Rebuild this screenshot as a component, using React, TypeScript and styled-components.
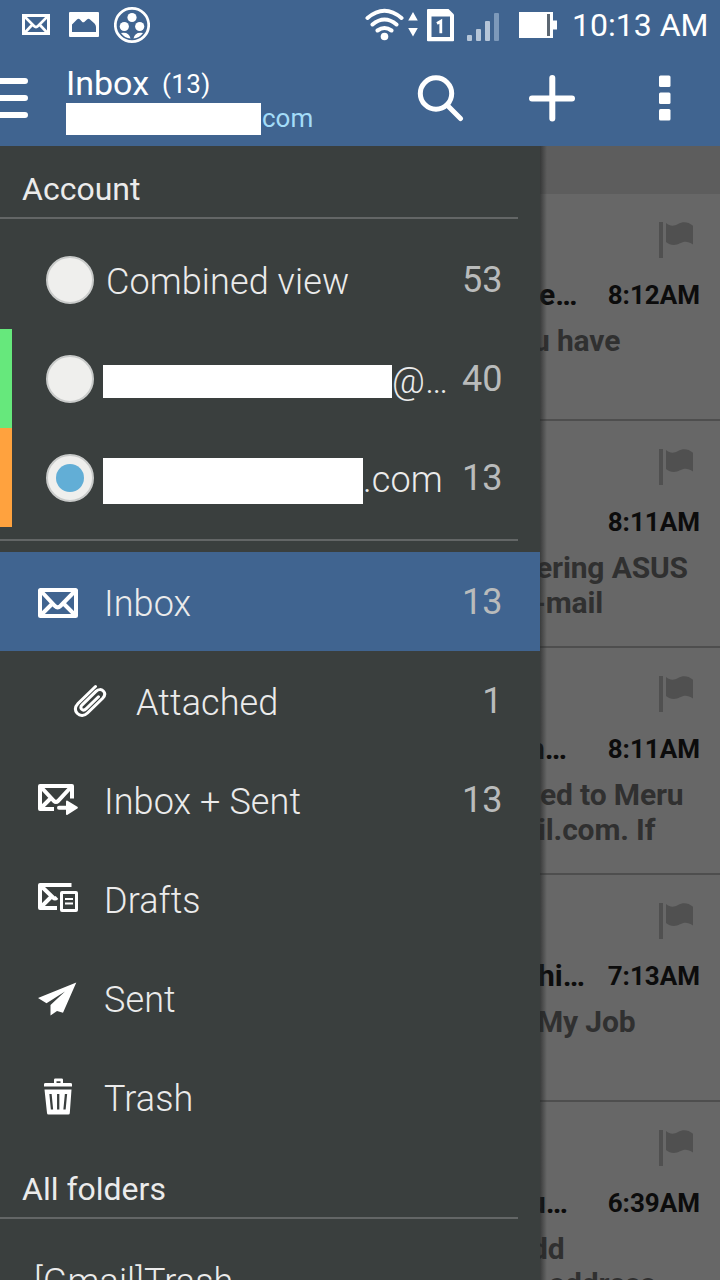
import React from 'react';
import styled, { createGlobalStyle } from 'styled-components';

const GlobalStyle = createGlobalStyle`
  * { box-sizing: border-box; }
  body { margin: 0; background: #676767; font-family: Roboto, "Liberation Sans", sans-serif; }
`;

const Screen = styled.div`
  width: 720px;
  height: 1280px;
  overflow: hidden;
  display: flex;
  flex-direction: column;
`;

const Header = styled.header`
  height: 146px;
  background: #406490;
  color: #fff;
  flex: none;
`;

const StatusBar = styled.div`
  height: 50px;
  display: flex;
  justify-content: space-between;
  padding: 0 12px 0 22px;
`;

const IconGroup = styled.div<{ $gap: number; $after?: number }>`
  display: flex;
  gap: ${p => p.$gap}px;
  margin-right: ${p => p.$after ?? 0}px;
  svg { display: block; flex: none; }
`;

const StatusSide = styled.div`
  display: flex;
`;

const Clock = styled.div`
  width: 136px;
  font-size: 32px;
  line-height: 50px;
  white-space: nowrap;
`;

const Toolbar = styled.div`
  height: 96px;
  display: flex;
  padding-right: 49px;
  svg { display: block; flex: none; }
`;

const TitleBlock = styled.div`
  flex: 1;
  padding: 13px 0 0 38px;
`;

const TitleLine = styled.div`
  display: flex;
  align-items: baseline;
  height: 40px;
  line-height: 40px;
  font-size: 34px;
  white-space: nowrap;
`;

const TitleCount = styled.span`
  margin-left: 13px;
  font-size: 26px;
  letter-spacing: 0.4px;
  position: relative;
  top: -2px;
`;

const AddressLine = styled.div`
  display: flex;
  gap: 1px;
  height: 32px;
  line-height: 30px;
  font-size: 26px;
  color: #a4dcf8;
`;

const Redacted = styled.span<{ $w: number; $h: number }>`
  width: ${p => p.$w}px;
  height: ${p => p.$h}px;
  background: #fff;
  flex: none;
`;

const Body = styled.div`
  flex: 1;
  min-height: 0;
  display: flex;
`;

const Drawer = styled.nav`
  width: 540px;
  flex: none;
  background: #3a3f3e;
  color: #ebebeb;
  overflow: hidden;
`;

const SectionTitle = styled.h2`
  margin: 0;
  width: 518px;
  height: 73px;
  padding: 15px 0 0 22px;
  border-bottom: 2px solid #636666;
  font-size: 32px;
  line-height: 56px;
  font-weight: 400;
`;

const Group = styled.div<{ $ruled?: boolean }>`
  width: 540px;
  padding-top: 11px;
  ${p => p.$ruled && 'padding-bottom: 12px;'}
`;

const Rule = styled.div`
  width: 518px;
  height: 2px;
  background: #636666;
`;

const Row = styled.div<{ $active?: boolean; $stripe?: string; $left: number }>`
  height: 99px;
  display: flex;
  align-items: center;
  border-left: ${p => (p.$stripe ? `12px solid ${p.$stripe}` : 'none')};
  padding-left: ${p => p.$left - (p.$stripe ? 12 : 0)}px;
  padding-right: 37.5px;
  background: ${p => (p.$active ? '#406490' : 'transparent')};
  svg { display: block; flex: none; }
`;

const Radio = styled.span`
  width: 48px;
  height: 48px;
  flex: none;
  display: flex;
  align-items: center;
  justify-content: center;
  border-radius: 50%;
  border: 2px solid #c9cbca;
  background: #efefed;
  margin-top: 1px;
`;

const RadioDot = styled.span`
  width: 28px;
  height: 28px;
  border-radius: 50%;
  background: #62aed6;
`;

const Label = styled.span<{ $gap: number }>`
  flex: 1;
  display: flex;
  align-items: center;
  margin-left: ${p => p.$gap}px;
  padding-top: 4px;
  font-size: 36px;
  line-height: 44px;
  font-weight: 300;
  white-space: nowrap;
  letter-spacing: 0.1px;
`;

const Masked = styled(Label)`
  ${Redacted} { margin-top: 2px; }
`;

const Count = styled.span`
  font-size: 36px;
  line-height: 44px;
  color: #b9bbbb;
`;

const MessageList = styled.main`
  flex: 1;
  min-width: 0;
  position: relative;
  overflow: hidden;
  background: #676767;
`;

const DrawerShadow = styled.div`
  position: absolute;
  inset: 0 auto 0 0;
  width: 7px;
  background: linear-gradient(90deg, rgba(35, 37, 37, 0.65), rgba(60, 60, 60, 0));
`;

const ListHeader = styled.div`
  height: 48px;
  background: #5d5d5d;
`;

const Message = styled.article`
  height: 227px;
  border-bottom: 2px solid #4e4e4e;
  padding: 28px 20px 0 0;
  white-space: nowrap;
  font-weight: 700;
  svg { display: block; margin: 0 7px 0 auto; }
`;

const MessageHead = styled.div`
  display: flex;
  justify-content: space-between;
  align-items: flex-start;
  height: 46px;
  margin-top: 19px;
  color: #0c0c0c;
  font-size: 26px;
  line-height: 36px;
`;

const Sender = styled.span<{ $shift: number }>`
  margin-left: ${p => p.$shift}px;
  font-size: 30px;
`;

const Preview = styled.div<{ $shift: number }>`
  margin-left: ${p => p.$shift}px;
  font-size: 30px;
  line-height: 35px;
  height: 35px;
  letter-spacing: -0.15px;
  color: #303030;
`;

const FlagIcon = () => (
  <svg width="34" height="36" viewBox="0 0 34 36" fill="#505050">
    <rect x="0" y="0" width="4" height="36" />
    <path d="M7 1c4 3.500 8 3.300 12 1c5-2.800 10-2.200 15 1.700v18.800c-5-3.500-9-3.500-13-1.200c-5 2.600-10 2-14-1.300z" />
  </svg>
);

const MailStatusIcon = () => (
  <svg width="28" height="50" viewBox="22 0 28 50" fill="none" stroke="#fff">
    <rect x="23.500" y="15.500" width="25" height="18" strokeWidth="3" />
    <path d="M24.500 16.500l9.500 9.500q2 2 4 0L47.500 16.500M24.500 33l8-8.500M47.500 33l-8-8.500" strokeWidth="2.600" />
  </svg>
);

const PictureIcon = () => (
  <svg width="30" height="50" viewBox="69 0 30 50">
    <rect x="69" y="12" width="30" height="25" rx="1" fill="#fff" />
    <path d="M72 32V24.500L77 19.500q1.500-1.500 3 0L82.500 22.200h1.500L87 19.500q1.500-1.500 3 0L94.500 23.500q1.500 1.500 1.500 3.500V32z" fill="#406490" />
  </svg>
);

const ReelIcon = () => (
  <svg width="36" height="50" viewBox="114 0 36 50" fill="#fff">
    <circle cx="132" cy="25" r="16.700" fill="none" stroke="#fff" strokeWidth="2.700" />
    <circle cx="132" cy="17.500" r="4.600" />
    <circle cx="124.300" cy="26.500" r="4.600" />
    <circle cx="139.700" cy="26.500" r="4.600" />
    <path d="M121 33q8-1.500 9.500 5.500q-6-.5-9.500-5.500zM143 33q-8-1.500-9.500 5.500q6-.5 9.500-5.500z" />
  </svg>
);

const WifiIcon = () => (
  <svg width="40" height="50" viewBox="365 0 40 50" fill="none" stroke="#fff" strokeWidth="4" strokeLinecap="round">
    <path d="M367.500 18q17-14.500 34 0M372.500 24.500q12-10 24 0M377.500 30.500q7-5 14 0" />
    <circle cx="384.500" cy="36.500" r="3.800" fill="#fff" stroke="none" />
  </svg>
);

const TransferIcon = () => (
  <svg width="12" height="50" viewBox="407 0 12 50" fill="#fff">
    <path d="M413 12l4.800 8.500h-9.600zM413 36.500l4.800-8.500h-9.600z" />
  </svg>
);

const SimIcon = () => (
  <svg width="28" height="50" viewBox="427 0 28 50">
    <path d="M428 9h20.500l5.500 5.500V40.500q0 .8-1 .8H428q-1 0-1-.8V10q0-1 1-1z" fill="#fff" />
    <path d="M431.500 16.500h18.500V37h-18.500z" fill="#406490" />
    <path d="M437 23.500l3.800-2.200v12" fill="none" stroke="#fff" strokeWidth="2.800" />
  </svg>
);

const SignalIcon = () => (
  <svg width="32" height="50" viewBox="467 0 32 50" fill="#b5c5d8">
    <rect x="467" y="35" width="5" height="6" rx="1" />
    <rect x="476" y="29" width="5" height="12" rx="1" />
    <rect x="485" y="21" width="5" height="20" rx="1" />
    <rect x="494" y="13" width="5" height="28" rx="1" fill="#7d99ba" />
  </svg>
);

const BatteryIcon = () => (
  <svg width="38" height="50" viewBox="519 0 38 50" fill="#fff">
    <path d="M519 12h34v8.500h4v9h-4V38h-34z" />
    <rect x="547" y="14" width="3" height="22" fill="#5c6772" />
  </svg>
);

const MenuIcon = () => (
  <svg width="28" height="96" viewBox="0 50 28 96" stroke="#fff" strokeWidth="6" strokeLinecap="round">
    <path d="M-6 81h31M-6 98h31M-6 115h31" />
  </svg>
);

const SearchIcon = () => (
  <svg width="48" height="96" viewBox="416 50 48 96" fill="none" stroke="#fff" strokeWidth="5">
    <circle cx="436" cy="93.500" r="15.700" />
    <path d="M447.500 105.500L460.500 118.500" strokeLinecap="round" />
  </svg>
);

const PlusIcon = () => (
  <svg width="48" height="96" viewBox="528 50 48 96" fill="none" stroke="#fff" strokeWidth="6" strokeLinecap="round">
    <path d="M552.300 78v40.500M532 98.500h40" />
  </svg>
);

const MoreIcon = () => (
  <svg width="12" height="96" viewBox="659 50 12 96" fill="#fff">
    <rect x="659" y="75.500" width="11.500" height="11.500" rx="1.500" />
    <rect x="659" y="92.500" width="11.500" height="11.500" rx="1.500" />
    <rect x="659" y="109" width="11.500" height="11.500" rx="1.500" />
  </svg>
);

const InboxIcon = () => (
  <svg width="40" height="99" viewBox="38 552 40 99" fill="none" stroke="#fff">
    <rect x="40" y="590" width="36" height="26" rx=".5" strokeWidth="4" />
    <path d="M40.500 590.500L55 606q2.700 2.600 5.400 0L75.500 590.500M40.500 615.500l12.500-12.500M75.500 615.500l-12.500-12.500" strokeWidth="4" />
  </svg>
);

const ClipIcon = () => (
  <svg width="34" height="99" viewBox="73 651 34 99" fill="none" stroke="#fff" strokeWidth="3" strokeLinecap="round">
    <path d="M95.500 686.500L78 703.500c-3 3.200-3.200 7-.8 9.800c2.800 3 7.200 2.800 10.300-.3L102.700 698.200c2.400-2.500 2.600-5.200.6-7.200c-2-2-5-1.800-7.300.4L82.200 704.800c-1.600 1.700-1.600 3.300-.5 4.500c1.200 1.200 3 .9 4.600-.6L98.500 696.800" />
  </svg>
);

const InboxSentIcon = () => (
  <svg width="40" height="99" viewBox="38 750 40 99" fill="none" stroke="#fff" strokeWidth="4">
    <path d="M54 809H40V786h32v12.500" strokeLinejoin="round" />
    <path d="M40.500 786.500L54 801q2 2 4 0L71.500 786.500M40.500 808.500l11.500-11.500" />
    <path d="M59 807.700h8" strokeLinecap="round" />
    <path d="M67 801.500l9.800 6.200-9.800 6.300z" fill="#fff" strokeWidth="2" strokeLinejoin="round" />
  </svg>
);

const DraftsIcon = () => (
  <svg width="40" height="99" viewBox="38 849 40 99" fill="none" stroke="#fff" strokeWidth="4">
    <path d="M71.500 885H40v23h17" strokeLinejoin="round" />
    <path d="M40.500 885.500L53 897.500q2 1.800 4 0M40.500 907.500l11.500-11.500" />
    <rect x="61.500" y="892.500" width="15" height="18" rx=".5" strokeWidth="3" />
    <path d="M65 899h8M65 903.500h8" strokeWidth="2" />
  </svg>
);

const SentIcon = () => (
  <svg width="40" height="99" viewBox="38 948 40 99" fill="#fff">
    <path d="M76.300 982.500L38 998l8.500 5.200L65 991.500 50.500 1005v10.500l6.500-4.500 6 1.800z" />
  </svg>
);

const TrashIcon = () => (
  <svg width="40" height="99" viewBox="38 1047 40 99" fill="#fff">
    <path d="M54 1083v-3.200q0-1.300 1.300-1.300h6.400q1.300 0 1.300 1.300V1083h7.500q1.500 0 1.500 1.200v2.300H44v-2.300q0-1.200 1.500-1.200zM56.500 1083h4v-1.800h-4z" fillRule="evenodd" />
    <path d="M44.500 1089.500h27L69.800 1113q0 1.500-1.500 1.500H48.500q-1.500 0-1.500-1.500z" />
    <path d="M50.500 1094l1.500 15.500M58.200 1094v15.500M66 1094l-1.500 15.500" stroke="#3a3f3e" strokeWidth="2.300" fill="none" />
  </svg>
);

const folders = [
  { name: 'Inbox', icon: <InboxIcon />, count: 13, active: true },
  { name: 'Attached', icon: <ClipIcon />, count: 1, nested: true },
  { name: 'Inbox + Sent', icon: <InboxSentIcon />, count: 13 },
  { name: 'Drafts', icon: <DraftsIcon /> },
  { name: 'Sent', icon: <SentIcon /> },
  { name: 'Trash', icon: <TrashIcon /> },
];

type Line = { text: string; shift: number };
type Mail = { sender: string; senderShift: number; time: string; lines: Line[] };

const messages: Mail[] = [
  { sender: 'e…', senderShift: -1, time: '8:12AM', lines: [{ text: 'u have', shift: -7 }] },
  {
    sender: '',
    senderShift: 0,
    time: '8:11AM',
    lines: [{ text: 'ering ASUS', shift: -4 }, { text: '-mail', shift: -6 }],
  },
  {
    sender: 'n…',
    senderShift: -12,
    time: '8:11AM',
    lines: [{ text: 'ed to Meru', shift: 0 }, { text: 'il.com. If', shift: -2 }],
  },
  { sender: 'hi…', senderShift: -2, time: '7:13AM', lines: [{ text: 'My Job', shift: -3 }] },
  {
    sender: 'u…',
    senderShift: -11,
    time: '6:39AM',
    lines: [{ text: 'dd', shift: -9 }, { text: 'address', shift: 9 }],
  },
];

export default function App() {
  return (
    <>
      <GlobalStyle />
      <Screen>
        <Header>
          <StatusBar>
            <StatusSide>
              <IconGroup $gap={19} $after={15}>
                <MailStatusIcon />
                <PictureIcon />
              </IconGroup>
              <IconGroup $gap={0}>
                <ReelIcon />
              </IconGroup>
            </StatusSide>
            <StatusSide>
              <IconGroup $gap={2} $after={8}>
                <WifiIcon />
                <TransferIcon />
              </IconGroup>
              <IconGroup $gap={12} $after={20}>
                <SimIcon />
                <SignalIcon />
              </IconGroup>
              <IconGroup $gap={0} $after={15}>
                <BatteryIcon />
              </IconGroup>
              <Clock>10:13 AM</Clock>
            </StatusSide>
          </StatusBar>
          <Toolbar>
            <MenuIcon />
            <TitleBlock>
              <TitleLine>
                Inbox <TitleCount>(13)</TitleCount>
              </TitleLine>
              <AddressLine>
                <Redacted $w={195} $h={32} />
                com
              </AddressLine>
            </TitleBlock>
            <IconGroup $gap={64} $after={83}>
              <SearchIcon />
              <PlusIcon />
            </IconGroup>
            <MoreIcon />
          </Toolbar>
        </Header>
        <Body>
          <Drawer>
            <SectionTitle>Account</SectionTitle>
            <Group $ruled>
              <Row $left={46}>
                <Radio />
                <Label $gap={12}>Combined view</Label>
                <Count>53</Count>
              </Row>
              <Row $left={46} $stripe="#66e87c">
                <Radio />
                <Masked $gap={9}>
                  <Redacted $w={289} $h={33} />
                  @…
                </Masked>
                <Count>40</Count>
              </Row>
              <Row $left={46} $stripe="#ffa23e">
                <Radio>
                  <RadioDot />
                </Radio>
                <Masked $gap={9}>
                  <Redacted $w={260} $h={46} />
                  .com
                </Masked>
                <Count>13</Count>
              </Row>
            </Group>
            <Rule />
            <Group>
              {folders.map(f => (
                <Row key={f.name} $active={f.active} $left={f.nested ? 73 : 38}>
                  {f.icon}
                  <Label $gap={f.nested ? 29 : 26}>{f.name}</Label>
                  {f.count && <Count>{f.count}</Count>}
                </Row>
              ))}
            </Group>
            <SectionTitle>All folders</SectionTitle>
            <Group>
              <Row $left={34}>
                <Label $gap={0}>[Gmail]Trash</Label>
              </Row>
            </Group>
          </Drawer>
          <MessageList>
            <ListHeader />
            {messages.map((m, i) => (
              <Message key={i}>
                <FlagIcon />
                <MessageHead>
                  <Sender $shift={m.senderShift}>{m.sender}</Sender>
                  <span>{m.time}</span>
                </MessageHead>
                {m.lines.map(line => (
                  <Preview key={line.text} $shift={line.shift}>
                    {line.text}
                  </Preview>
                ))}
              </Message>
            ))}
            <DrawerShadow />
          </MessageList>
        </Body>
      </Screen>
    </>
  );
}
